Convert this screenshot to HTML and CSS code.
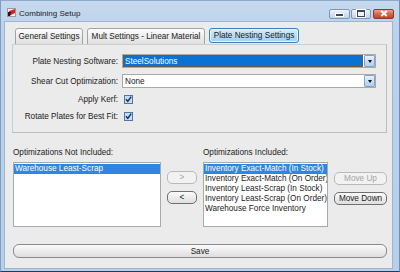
FILE: index.html
```html
<!DOCTYPE html>
<html>
<head>
<meta charset="utf-8">
<link rel="stylesheet" href="styles.css">
</head>
<body>
<div class="window">
  <div class="titlebar">
    <svg class="appicon" width="9" height="9" viewBox="0 0 9 9">
      <rect x="0.5" y="0.5" width="8" height="8" fill="#f2f2f2" stroke="#9a9a9a"/>
      <polygon points="2,3 8,1 8,5 2,8" fill="#d8202a"/>
      <polygon points="1,4 4,4 3,8 1,8" fill="#1a1a1a"/>
    </svg>
    <span class="title">Combining Setup</span>
    <div class="controls">
      <span class="ctl min"><i></i></span>
      <span class="ctl max"><i></i></span>
      <span class="ctl close"><svg width="8" height="7" viewBox="0 0 8 7"><path d="M1.2 1 L6.8 6 M6.8 1 L1.2 6" stroke="#fff" stroke-width="1.7"/></svg></span>
    </div>
  </div>
  <div class="client">
    <div class="tabs">
      <div class="tab w1">General Settings</div>
      <div class="tab w2">Mult Settings - Linear Material</div>
      <div class="tab w3 active">Plate Nesting Settings</div>
    </div>
    <div class="panel">
      <div class="row combo-row">
        <span class="lbl">Plate Nesting Software:</span>
        <div class="combo sel"><span class="val">SteelSolutions</span><span class="drop"><i></i></span></div>
      </div>
      <div class="row combo-row">
        <span class="lbl">Shear Cut Optimization:</span>
        <div class="combo"><span class="val">None</span><span class="drop"><i></i></span></div>
      </div>
      <div class="row cb-row first">
        <span class="lbl">Apply Kerf:</span>
        <svg class="cb" width="9" height="9" viewBox="0 0 9 9"><rect x="0.5" y="0.5" width="8" height="8" fill="#c6ddf5" stroke="#4a78ad"/><path d="M2 4.3 L3.8 6.4 L7.2 1.6" stroke="#1d2e48" stroke-width="1.5" fill="none"/></svg>
      </div>
      <div class="row cb-row">
        <span class="lbl">Rotate Plates for Best Fit:</span>
        <svg class="cb" width="9" height="9" viewBox="0 0 9 9"><rect x="0.5" y="0.5" width="8" height="8" fill="#c6ddf5" stroke="#4a78ad"/><path d="M2 4.3 L3.8 6.4 L7.2 1.6" stroke="#1d2e48" stroke-width="1.5" fill="none"/></svg>
      </div>
    </div>
    <div class="lists">
      <div class="cap c1">Optimizations Not Included:</div>
      <div class="cap c3">Optimizations Included:</div>
      <div class="listbox l1">
        <div class="item selitem">Warehouse Least-Scrap</div>
      </div>
      <div class="mid">
        <span class="btn small disabled">&gt;</span>
        <span class="btn small">&lt;</span>
      </div>
      <div class="listbox l3">
        <div class="item selitem">Inventory Exact-Match (In Stock)</div>
        <div class="item">Inventory Exact-Match (On Order)</div>
        <div class="item">Inventory Least-Scrap (In Stock)</div>
        <div class="item">Inventory Least-Scrap (On Order)</div>
        <div class="item">Warehouse Force Inventory</div>
      </div>
      <div class="side">
        <span class="btn disabled">Move Up</span>
        <span class="btn">Move Down</span>
      </div>
    </div>
    <div class="btn save">Save</div>
  </div>
</div>
</body>
</html>
```

FILE: styles.css
```css
html, body {
  margin: 0;
  padding: 0;
  width: 400px;
  height: 272px;
  overflow: hidden;
  background: #b9d0ea;
}
.window {
  width: 400px;
  height: 272px;
  box-sizing: border-box;
  background: linear-gradient(#c6d9ee, #bcd2ea 30px, #b7cfe9);
  border-left: 1px solid #7f9cc2;
  border-top: 1px solid #8ea9cb;
  border-right: 1px solid #6f8db5;
  border-bottom: 1px solid #1f3b5c;
  display: flex;
  flex-direction: column;
  font-family: "Liberation Sans", Arial, sans-serif;
  font-size: 8.2px;
  color: #1a1a1a;
}
.titlebar {
  height: 20px;
  display: flex;
  align-items: center;
  padding-left: 6px;
  padding-top: 1px;
  box-sizing: border-box;
}
.appicon { flex: none; margin-right: 3px; margin-top: 2px; }
.title {
  font-size: 8px;
  color: #1c1c1c;
  margin-top: 3px;
  flex: 1;
}
.controls {
  display: flex;
  margin-right: 5px;
  margin-top: 4px;
  gap: 1px;
}
.ctl {
  height: 10px;
  box-sizing: border-box;
  border: 1px solid #7f97b6;
  border-radius: 2px;
  display: flex;
  align-items: center;
  justify-content: center;
  background: linear-gradient(#eef4fb, #d5e2f1 50%, #c2d4e9);
}
.ctl.min { width: 21px; }
.ctl.max { width: 20px; }
.ctl.close {
  width: 21px;
  margin-left: 1px;
  border-color: #8a3a2c;
  background: linear-gradient(#e8a596, #d6654f 50%, #c5432b);
}
.ctl.min i {
  width: 7px; height: 2px;
  background: #3b4a5c;
  border: 1px solid #fff;
  margin-top: 2px;
}
.ctl.max i {
  width: 6px; height: 4px;
  border: 1px solid #3b4a5c;
  border-top-width: 2px;
  background: #eef3f9;
  outline: 1px solid #fff;
}
.client {
  flex: 1;
  margin: 0 6px 2px 3px;
  background: #ebebeb;
  border: 1px solid #9fb5cf;
  display: flex;
  flex-direction: column;
  padding-left: 7px;
}
.tabs {
  display: flex;
  gap: 4px;
  margin-top: 6px;
  margin-left: 3px;
  height: 16px;
}
.tab {
  box-sizing: border-box;
  height: 17px;
  border: 1px solid #a3a3a3;
  border-radius: 3px 3px 0 0;
  background: linear-gradient(#fdfdfd, #ececec 55%, #e0e0e0);
  display: flex;
  align-items: center;
  justify-content: center;
  white-space: nowrap;
}
.tab.w1 { width: 68px; }
.tab.w2 { width: 118px; }
.tab.w3 { width: 90px; }
.tab.active {
  height: 15px;
  border: 1px solid #3c7fb8;
  border-radius: 3px;
  background: linear-gradient(#d8edfc, #b5dbf6 55%, #a3cff1);
  box-shadow: inset 0 0 0 1px #e8f4fd;
}
.panel {
  width: 375px;
  height: 89px;
  box-sizing: border-box;
  border: 1px solid #cdcdcd;
  border-right-color: #bcbcbc;
  border-bottom-color: #bcbcbc;
  padding-top: 9px;
  display: flex;
  flex-direction: column;
}
.row {
  display: flex;
  align-items: center;
}
.lbl {
  width: 105px;
  text-align: right;
  margin-right: 4px;
  white-space: nowrap;
}
.combo-row { height: 14px; margin-bottom: 6px; }
.cb-row { height: 17px; }
.cb-row.first { margin-top: -3px; }
.cb { margin-left: 2px; flex: none; }
.combo {
  width: 254px;
  height: 14px;
  box-sizing: border-box;
  border: 1px solid #a9a9a9;
  background: #fff;
  display: flex;
  align-items: stretch;
}
.combo .val {
  flex: 1;
  padding-left: 2px;
  display: flex;
  align-items: center;
  white-space: nowrap;
}
.combo.sel .val {
  background: #0a72d2;
  color: #fff;
  border: 1px solid #6a5a48;
  padding-left: 1px;
}
.drop {
  width: 11px;
  box-sizing: border-box;
  margin: 0 0 0 1px;
  border: 1px solid #7fa3c9;
  border-radius: 1px;
  background: linear-gradient(#e9f3fc, #c7def4 50%, #b2d0ee);
  display: flex;
  align-items: center;
  justify-content: center;
}
.drop i {
  width: 0; height: 0;
  border-left: 2.5px solid transparent;
  border-right: 2.5px solid transparent;
  border-top: 3px solid #111;
}
.lists {
  margin-top: 15px;
  margin-left: 1px;
  display: grid;
  grid-template-columns: 148px 30px 125px 53px;
  grid-template-rows: 14px 65px;
  column-gap: 6px;
}
.cap { line-height: 10px; white-space: nowrap; }
.c1 { grid-column: 1; grid-row: 1; }
.c3 { grid-column: 3; grid-row: 1; }
.listbox {
  grid-row: 2;
  box-sizing: border-box;
  border: 1px solid #a6a9b0;
  background: #fff;
  padding-top: 1px;
  overflow: hidden;
}
.l1 { grid-column: 1; }
.l3 { grid-column: 3; }
.item {
  height: 10px;
  line-height: 10px;
  padding-left: 1px;
  white-space: nowrap;
}
.selitem {
  background: #2f86e2;
  color: #fff;
}
.mid, .side {
  grid-row: 2;
  display: flex;
  flex-direction: column;
  gap: 7px;
}
.mid { grid-column: 2; padding-top: 9px; }
.side { grid-column: 4; padding-top: 10px; }
.btn {
  box-sizing: border-box;
  height: 13px;
  border: 1px solid #707070;
  border-radius: 5px;
  background: linear-gradient(#fbfbfb, #ececec 50%, #dedede);
  display: flex;
  align-items: center;
  justify-content: center;
  white-space: nowrap;
}
.btn.disabled {
  border-color: #b9b9b9;
  color: #a3a3a3;
  background: #f2f2f2;
}
.save {
  margin-top: 17px;
  margin-left: 1px;
  width: 374px;
  height: 14px;
  border-color: #8a8a8a;
  border-radius: 6px;
}
```
